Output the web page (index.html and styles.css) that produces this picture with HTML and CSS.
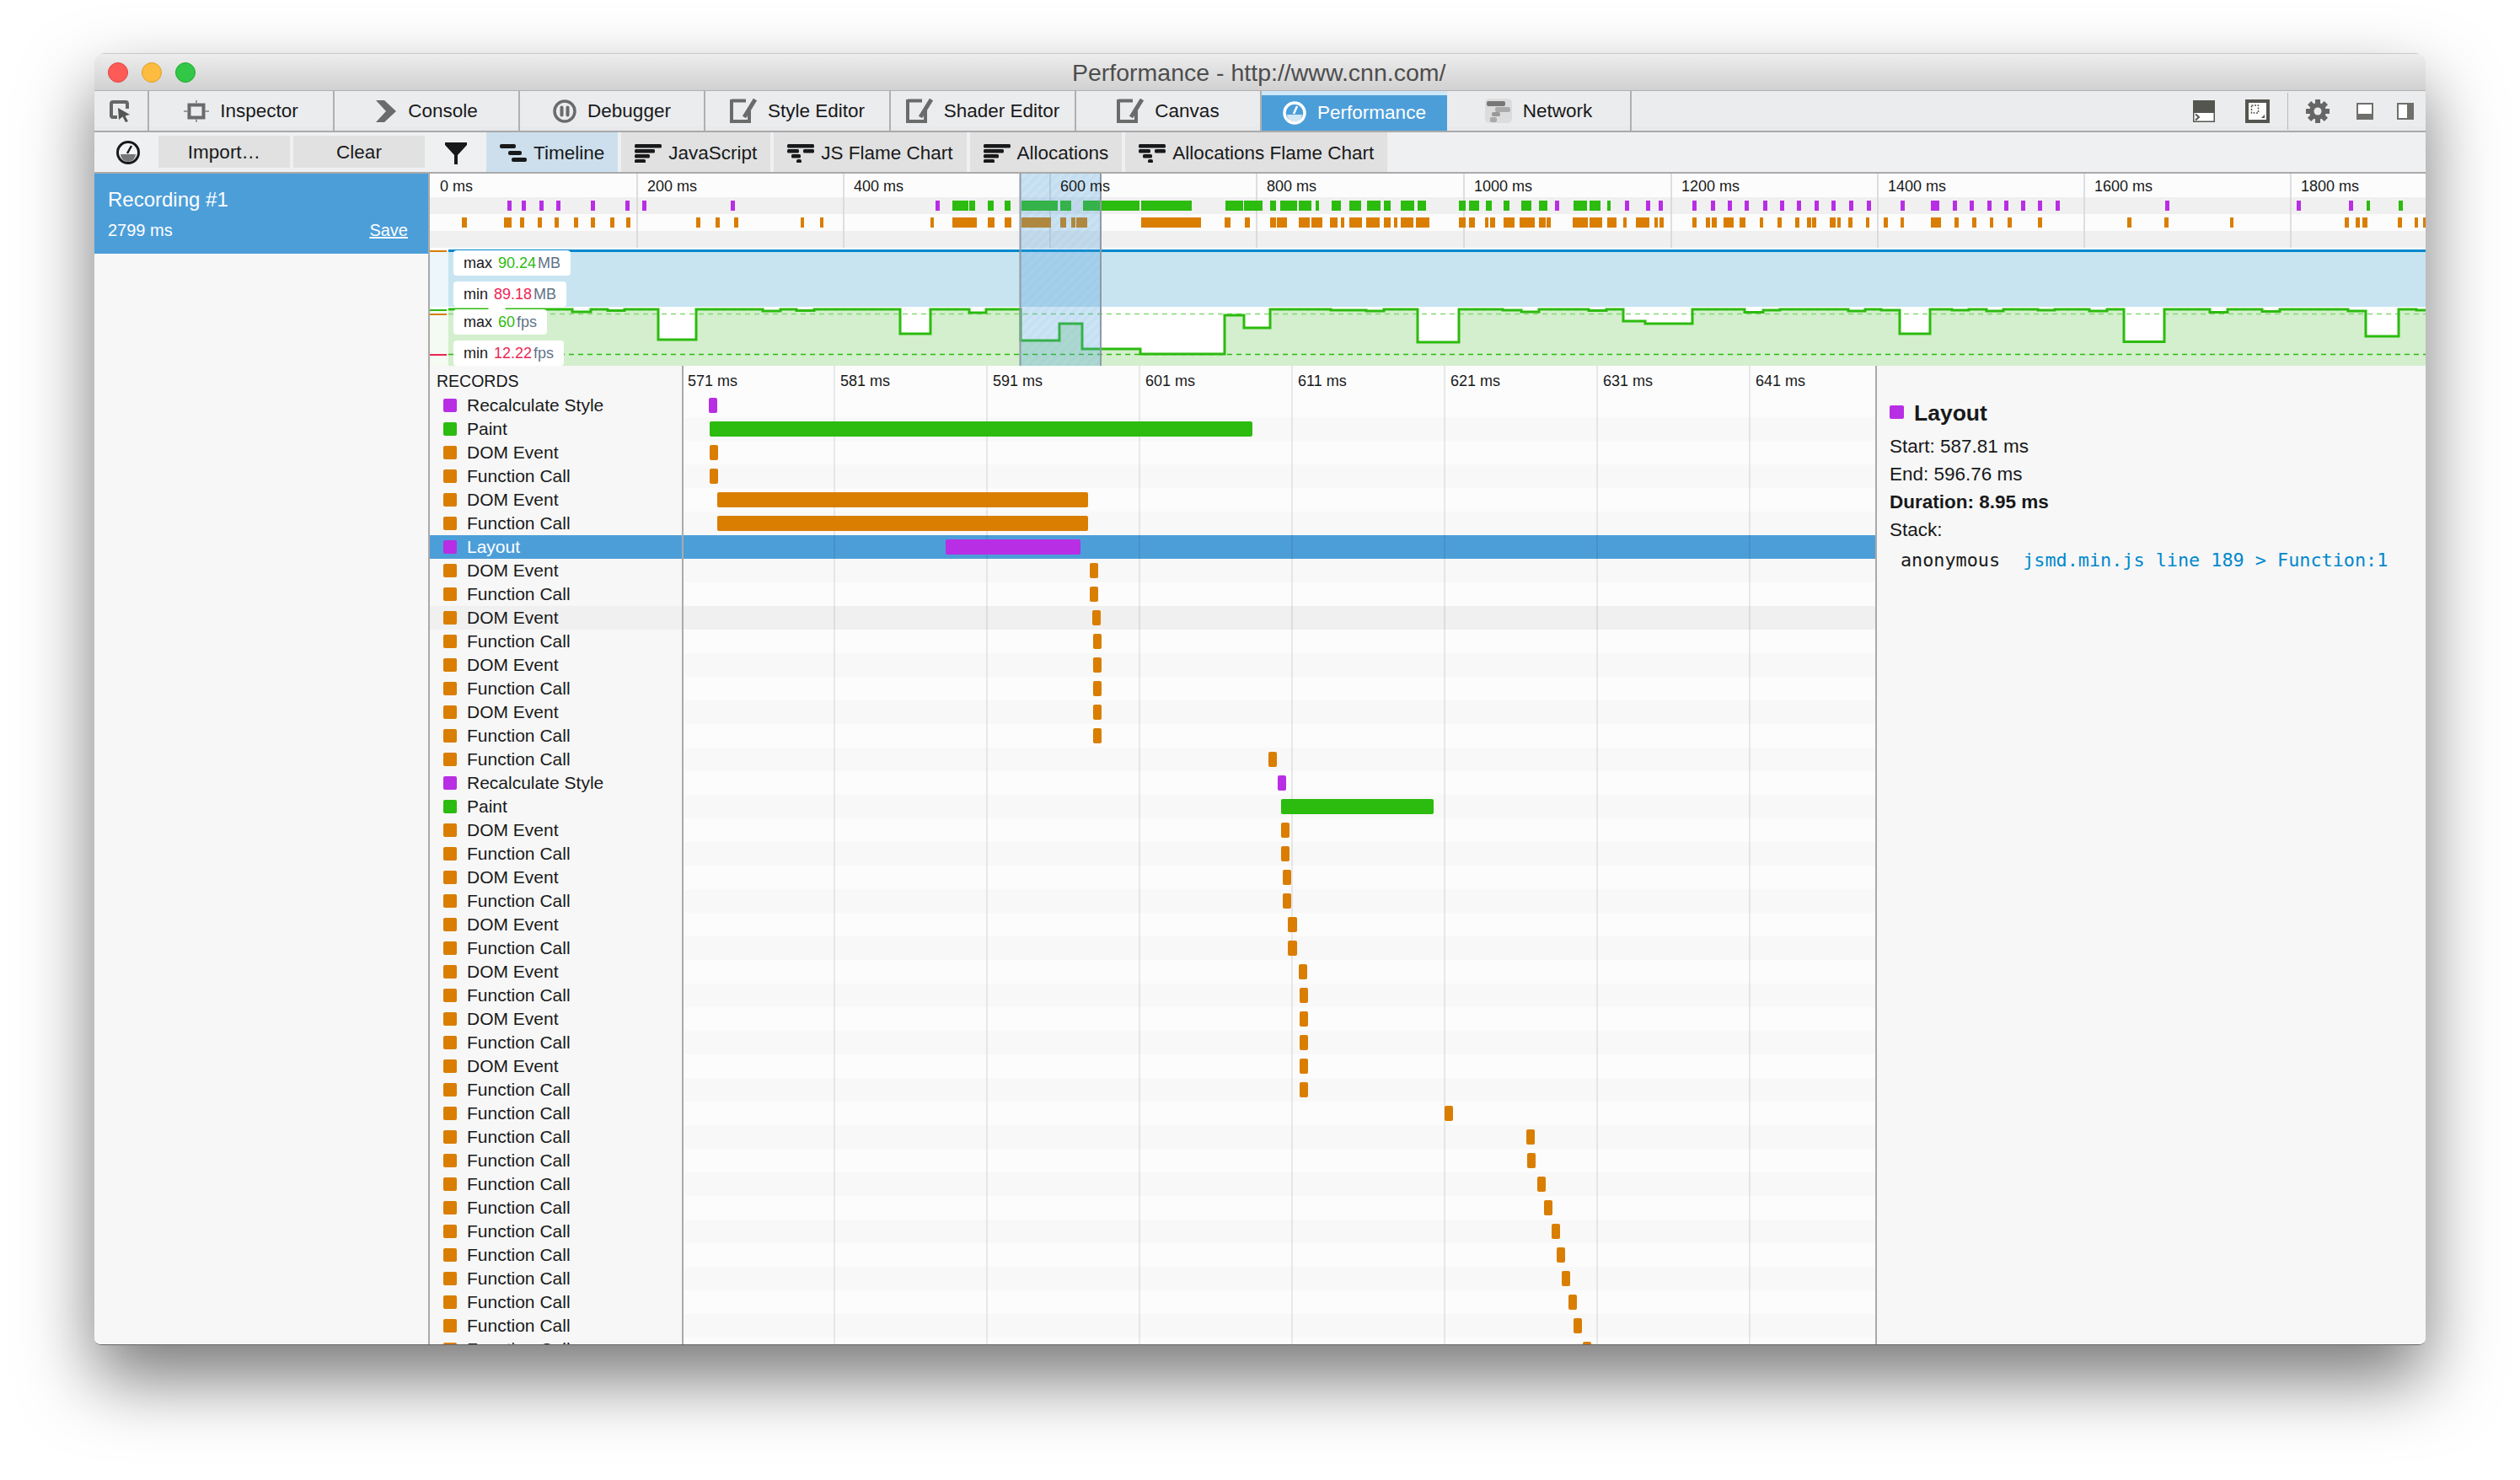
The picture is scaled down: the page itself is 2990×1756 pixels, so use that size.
FILE: index.html
```html
<!DOCTYPE html>
<html>
<head>
<meta charset="utf-8">
<title>Performance - http://www.cnn.com/</title>
<link rel="stylesheet" href="styles.css">
</head>
<body>
<svg class="sprites" width="0" height="0">
  <symbol id="i-edit" viewBox="0 0 32 29">
    <path d="M2 2.5H19M2 1V27H23V14" fill="none" stroke="#6b6b6b" stroke-width="4"/>
    <path d="M30 1L17 22" fill="none" stroke="#6b6b6b" stroke-width="5"/>
  </symbol>
  <symbol id="i-bars" viewBox="0 0 32 22">
    <rect y="0" width="32" height="4.5" rx="1.5"/>
    <rect y="6" width="24" height="4.5" rx="1.5"/>
    <rect y="12" width="18" height="4.5" rx="1.5"/>
    <rect y="18" width="13" height="4.5" rx="1.5"/>
  </symbol>
  <symbol id="i-flame" viewBox="0 0 32 22">
    <rect y="0" width="32" height="4.5" rx="1.5"/>
    <rect y="6" width="14" height="4.5" rx="1.5"/>
    <rect x="19" y="6" width="13" height="4.5" rx="1.5"/>
    <rect x="5" y="12" width="11" height="4.5" rx="1.5"/>
    <rect x="11" y="18" width="6" height="4.5" rx="2"/>
  </symbol>
</svg>

<div class="window">
  <div class="titlebar">
    <div class="lights">
      <span class="light red"></span>
      <span class="light yellow"></span>
      <span class="light green"></span>
    </div>
    <div class="title">Performance - http://www.cnn.com/</div>
  </div>

  <div class="tabbar">
    <div class="tab-pick">
      <svg width="26" height="26" viewBox="0 0 26 26">
        <path d="M9 20H4a2 2 0 0 1-2-2V4a2 2 0 0 1 2-2h15a2 2 0 0 1 2 2v6" fill="none" stroke="#666" stroke-width="4"/>
        <path d="M10 9L24 17L18.500 18.500L22 25L19 26L15.500 19.500L11 23Z" fill="#555"/>
      </svg>
    </div>
    <div class="tab">
      <svg width="30" height="26" viewBox="0 0 30 26">
        <rect x="6.500" y="5.500" width="17" height="15" fill="none" stroke="#6b6b6b" stroke-width="4"/>
        <path d="M15 0V4M15 22V26M0 13H5M25 13H30" stroke="#9a9a9a" stroke-width="2"/>
      </svg>
      <span>Inspector</span>
    </div>
    <div class="tab">
      <svg width="26" height="26" viewBox="0 0 26 26">
        <path d="M1 0H11L25 13L11 26H1L13 13Z" fill="#6b6b6b"/>
      </svg>
      <span>Console</span>
    </div>
    <div class="tab">
      <svg width="28" height="28" viewBox="0 0 28 28">
        <circle cx="14" cy="14" r="12" fill="none" stroke="#6b6b6b" stroke-width="3.500"/>
        <rect x="8.500" y="7.500" width="4" height="13" rx="2" fill="#6b6b6b"/>
        <rect x="15.500" y="7.500" width="4" height="13" rx="2" fill="#6b6b6b"/>
      </svg>
      <span>Debugger</span>
    </div>
    <div class="tab">
      <svg width="32" height="29"><use href="#i-edit"/></svg>
      <span>Style Editor</span>
    </div>
    <div class="tab">
      <svg width="32" height="29"><use href="#i-edit"/></svg>
      <span>Shader Editor</span>
    </div>
    <div class="tab">
      <svg width="32" height="29"><use href="#i-edit"/></svg>
      <span>Canvas</span>
    </div>
    <div class="tab tab-selected">
      <svg width="28" height="28" viewBox="0 0 28 28">
        <circle cx="14" cy="14" r="12" fill="none" stroke="#fff" stroke-width="3.500"/>
        <path d="M5 16H23A9 9 0 0 1 5 16Z" fill="#fff" opacity=".75"/>
        <path d="M13 15L17 6" stroke="#fff" stroke-width="2.500"/>
      </svg>
      <span>Performance</span>
    </div>
    <div class="tab">
      <svg width="32" height="29" viewBox="0 0 32 29">
        <rect width="32" height="29" rx="5" fill="#dcdcdc"/>
        <rect x="2" y="3" width="22" height="6" rx="2" fill="#777"/>
        <rect x="12" y="10" width="18" height="6" rx="2" fill="#aaa"/>
        <rect x="8" y="16" width="10" height="5" rx="2" fill="#999"/>
        <rect x="6" y="22" width="8" height="6" rx="2" fill="#aaa"/>
      </svg>
      <span>Network</span>
    </div>
    <div class="tab-tools">
      <svg class="tool-console" width="26" height="26" viewBox="0 0 26 26">
        <rect width="26" height="26" fill="#55554f"/>
        <rect x="1.500" y="15" width="23" height="9.500" fill="#fff"/>
        <path d="M3 16.500L7 20L3 23.500" fill="none" stroke="#55554f" stroke-width="2"/>
      </svg>
      <svg class="tool-responsive" width="29" height="28" viewBox="0 0 29 28">
        <rect width="29" height="28" fill="#55554f"/>
        <rect x="4" y="4" width="21" height="20" fill="#fff"/>
        <rect x="7.500" y="7" width="8" height="9" fill="none" stroke="#55554f" stroke-width="1.500" stroke-dasharray="2 1.500"/>
        <path d="M23 18V22H19Z" fill="#55554f"/>
      </svg>
      <span class="tool-sep"></span>
      <svg class="tool-gear" width="28" height="28" viewBox="0 0 28 28">
        <g fill="#666">
          <circle cx="14" cy="14" r="10"/>
          <rect x="11" y="0" width="6" height="28"/>
          <rect x="11" y="0" width="6" height="28" transform="rotate(45 14 14)"/>
          <rect x="11" y="0" width="6" height="28" transform="rotate(90 14 14)"/>
          <rect x="11" y="0" width="6" height="28" transform="rotate(135 14 14)"/>
        </g>
        <circle cx="14" cy="14" r="4.500" fill="#ebecee"/>
      </svg>
      <svg class="tool-dock" width="20" height="20" viewBox="0 0 20 20">
        <rect width="20" height="20" fill="#6f6f6b"/>
        <rect x="2" y="2" width="16" height="11" fill="#fff"/>
      </svg>
      <svg class="tool-dock-side" width="20" height="20" viewBox="0 0 20 20">
        <rect width="20" height="20" fill="#6f6f6b"/>
        <rect x="2" y="2" width="10" height="16" fill="#fff"/>
      </svg>
    </div>
  </div>

  <div class="toolbar">
    <svg class="gauge" width="28" height="28" viewBox="0 0 28 28">
      <circle cx="14" cy="14" r="12.500" fill="#f4f4f4" stroke="#18191a" stroke-width="3"/>
      <path d="M5 16H23A9 9 0 0 1 5 16Z" fill="#777"/>
      <path d="M13 15L18 6" stroke="#18191a" stroke-width="2.500"/>
    </svg>
    <button class="btn btn-import">Import…</button>
    <button class="btn btn-clear">Clear</button>
    <svg class="funnel" width="26" height="26" viewBox="0 0 26 26">
      <path d="M0 0H26V3L15 15V26H11V15L0 3Z" fill="#18191a"/>
    </svg>
    <button class="view view-selected">
      <svg width="32" height="22" viewBox="0 0 32 22">
        <rect x="0" y="0" width="19" height="5" rx="2"/>
        <rect x="10" y="8" width="16" height="5" rx="2"/>
        <rect x="14" y="16" width="18" height="5" rx="2"/>
      </svg>
      <span>Timeline</span>
    </button>
    <button class="view">
      <svg width="32" height="22"><use href="#i-bars"/></svg>
      <span>JavaScript</span>
    </button>
    <button class="view">
      <svg width="32" height="22"><use href="#i-flame"/></svg>
      <span>JS Flame Chart</span>
    </button>
    <button class="view">
      <svg width="32" height="22"><use href="#i-bars"/></svg>
      <span>Allocations</span>
    </button>
    <button class="view">
      <svg width="32" height="22"><use href="#i-flame"/></svg>
      <span>Allocations Flame Chart</span>
    </button>
  </div>

  <div class="main">
    <div class="sidebar">
      <div class="recording">
        <div class="recording-name">Recording #1</div>
        <div class="recording-info">
          <span>2799 ms</span>
          <a class="recording-save">Save</a>
        </div>
      </div>
    </div>

    <div class="content">
      <div class="overview" id="overview">
        <svg class="overview-graph" id="graph" width="2368" height="228" viewBox="510 206 2368 228"></svg>
        <div class="legend">
          <div class="legend-group">
            <div class="legend-item mem-max">max <b class="good">90.24</b><i>MB</i></div>
            <div class="legend-item mem-min">min <b class="bad">89.18</b><i>MB</i></div>
          </div>
          <div class="legend-group">
            <div class="legend-item fps-max">max <b class="good">60</b><i>fps</i></div>
            <div class="legend-item fps-min">min <b class="bad">12.22</b><i>fps</i></div>
          </div>
        </div>
      </div>

      <div class="details">
        <div class="records">
          <div class="records-head">
            <div class="rec-label">RECORDS</div>
            <div class="rec-track head-track">
              <span>571 ms</span><span>581 ms</span><span>591 ms</span><span>601 ms</span>
              <span>611 ms</span><span>621 ms</span><span>631 ms</span><span>641 ms</span>
            </div>
          </div>
          <div id="rows"></div>
        </div>
        <div class="marker-info">
          <div class="marker-title"><span class="swatch purple"></span>Layout</div>
          <div class="marker-line">Start: 587.81 ms</div>
          <div class="marker-line">End: 596.76 ms</div>
          <div class="marker-line strong">Duration: 8.95 ms</div>
          <div class="marker-line">Stack:</div>
          <div class="marker-stack">anonymous <a>jsmd.min.js line 189 &gt; Function:1</a></div>
        </div>
      </div>
    </div>
  </div>
</div>

<script src="timeline.js"></script>
</body>
</html>
```

FILE: styles.css
```css
* {
    box-sizing: border-box;
}
html, body {
    margin: 0;
    height: 100%;
    overflow: hidden;
    background: #fff;
}
body {
    padding: 63px 0 0 112px;
    font-family: "Liberation Sans", Arial, sans-serif;
    color: #18191a;
}
.sprites {
    position: absolute;
}

.window {
    width: 2766px;
    height: 1533px;
    display: flex;
    flex-direction: column;
    border-radius: 12px 12px 8px 8px;
    overflow: hidden;
    border-bottom: 1px solid #666;
    box-shadow: 0 40px 84px rgba(0, 0, 0, .53);
}

/* title bar */
.titlebar {
    height: 44px;
    flex: none;
    display: flex;
    align-items: center;
    position: relative;
    background: linear-gradient(#ededed, #d1d1d1);
    border-top: 1px solid #c8c8c8;
}
.lights {
    display: flex;
    gap: 16px;
    padding-left: 16px;
}
.light {
    width: 24px;
    height: 24px;
    border-radius: 50%;
}
.red { background: #fc5b57; border: 1px solid #e0443e; }
.yellow { background: #fdbc40; border: 1px solid #dea123; }
.green { background: #33c748; border: 1px solid #1daa2c; }
.title {
    position: absolute;
    left: 1160px;
    top: 5px;
    font-size: 28.500px;
    line-height: 34px;
    color: #4d4d4d;
}

/* tabs */
.tabbar {
    height: 50px;
    flex: none;
    display: flex;
    align-items: stretch;
    background: linear-gradient(#ebecee 90%, #e8e9eb 90%);
    border-top: 1px solid #b1b1b1;
    border-bottom: 2px solid #aaa;
    font-size: 22.5px;
}
.tab-pick {
    width: 65px;
    display: flex;
    align-items: center;
    justify-content: center;
    padding-right: 2px;
    border-right: 2px solid #b0b0b0;
}
.tab {
    width: 220px;
    display: flex;
    align-items: center;
    justify-content: center;
    gap: 13px;
    border-right: 2px solid #b0b0b0;
}
.tab-selected {
    background: #4c9ed9;
    border-right: none;
    border-top: 5px solid #cfe8f7;
    color: #fff;
}
.tab-selected + .tab {
    width: 219px;
}
.tab-tools {
    margin-left: auto;
    display: flex;
    align-items: center;
    padding-right: 14px;
}
.tool-responsive {
    margin-left: 36px;
}
.tool-sep {
    width: 1px;
    height: 44px;
    margin: 0 21px;
    background: #b8b8b8;
}
.tool-dock {
    margin-left: 32px;
}
.tool-dock-side {
    margin-left: 28px;
}

/* toolbar */
.toolbar {
    height: 49px;
    flex: none;
    display: flex;
    align-items: stretch;
    background: #eff0f2;
    border-bottom: 2px solid #aaa;
    font-size: 22.5px;
}
.gauge {
    align-self: center;
    margin-left: 26px;
}
.btn, .view {
    font: inherit;
    color: inherit;
    border: none;
    background: #e1e1e1;
    padding: 0;
}
.btn {
    width: 156px;
    height: 38px;
    margin-top: 4px;
    padding-top: 1px;
    align-self: flex-start;
}
.btn-import {
    margin-left: 22px;
}
.btn-clear {
    margin-left: 4px;
}
.funnel {
    align-self: center;
    margin: 2px 23px 0 24px;
}
.view {
    display: flex;
    align-items: center;
    gap: 8px;
    padding: 3px 16px 0;
    margin-right: 4px;
}
.view svg {
    fill: #18191a;
}
.view-selected {
    background: #cddfec;
}

/* main split */
.main {
    flex: 1;
    display: flex;
    min-height: 0;
}
.sidebar {
    width: 398px;
    flex: none;
    background: #f7f7f7;
    border-right: 2px solid #aaa;
}
.recording {
    height: 95px;
    padding: 15px 16px 0;
    background: #4c9ed9;
    color: #fff;
}
.recording-name {
    font-size: 24px;
    line-height: 32px;
}
.recording-info {
    display: flex;
    justify-content: space-between;
    align-items: center;
    padding: 7px 8px 0 0;
    font-size: 20px;
    line-height: 26px;
}
.recording-save {
    text-decoration: underline;
}

.content {
    flex: 1;
    min-width: 0;
    display: flex;
    flex-direction: column;
}

/* overview */
.overview {
    height: 228px;
    flex: none;
    position: relative;
    background: #fff;
}
.overview-graph {
    display: block;
}
.tick {
    position: absolute;
    top: 3px;
    font-size: 18px;
    line-height: 24px;
}
.legend {
    position: absolute;
    left: 28px;
    top: 91px;
    display: flex;
    flex-direction: column;
    gap: 3px;
}
.legend-group {
    display: flex;
    flex-direction: column;
    gap: 7px;
}
.legend-item {
    height: 30px;
    padding: 0 12px;
    font-size: 18px;
    line-height: 30px;
    background: #fff;
    border-radius: 4px;
    align-self: flex-start;
    white-space: nowrap;
}
.legend-item b {
    font-weight: normal;
    margin-left: 2px;
}
.legend-item i {
    font-style: normal;
    color: #5f7387;
    margin-left: 2px;
}
.good { color: #2cbb0f; }
.bad { color: #ed2655; }

/* records */
.details {
    flex: 1;
    display: flex;
    min-height: 0;
}
.records {
    width: 1717px;
    flex: none;
    overflow: hidden;
    border-right: 2px solid #aaa;
    background: #fcfcfc;
}
.records-head {
    height: 33px;
    display: flex;
    align-items: center;
}
.rec-label {
    width: 301px;
    flex: none;
    height: 100%;
    display: flex;
    align-items: center;
    background: #f7f7f7;
    border-right: 2px solid #aaa;
}
.records-head .rec-label {
    padding: 3px 0 0 8px;
    font-size: 19.500px;
}
.rec-track {
    flex: 1;
    height: 100%;
    display: flex;
    align-items: center;
    background-image: linear-gradient(90deg, rgba(0, 0, 0, .08) 2px, transparent 2px);
    background-size: 181px 100%;
    background-position: 178px 0;
}
.head-track {
    padding-top: 3px;
}
.head-track span {
    width: 181px;
    flex: none;
    padding-left: 5px;
    font-size: 18px;
}
.rec-row {
    height: 28px;
    display: flex;
    font-size: 21px;
}
.rec-row .rec-label {
    padding-left: 16px;
    gap: 12px;
}
.rec-row:nth-child(even) .rec-track {
    background-color: #f8f8f8;
}
.rec-row.hover .rec-track,
.rec-row.hover .rec-label {
    background-color: #f0f0f0;
}
.rec-row.selected .rec-label,
.rec-row.selected .rec-track {
    background-color: #4c9ed9;
    color: #fff;
}
.swatch {
    width: 16px;
    height: 16px;
    flex: none;
    border-radius: 2px;
}
.bar {
    height: 18px;
    border-radius: 2px;
}
.purple { background-color: #b82ee5; }
.lime { background-color: #2cbb0f; }
.orange { background-color: #d97e00; }

/* side panel */
.marker-info {
    flex: 1;
    background: #f7f7f7;
    padding: 38px 0 0 15px;
    font-size: 22.5px;
}
.marker-title {
    display: flex;
    align-items: center;
    gap: 12px;
    height: 36px;
    font-size: 26.500px;
    font-weight: bold;
}
.marker-title .swatch {
    width: 17px;
    margin-top: -2px;
}
.marker-line {
    height: 33px;
    line-height: 33px;
}
.marker-title + .marker-line {
    margin-top: 5px;
}
.strong {
    font-weight: bold;
}
.marker-stack {
    margin-top: 2px;
    padding-left: 13px;
    height: 36px;
    line-height: 36px;
    font-family: "DejaVu Sans Mono", "Liberation Mono", monospace;
    font-size: 21.800px;
    white-space: pre;
}
.marker-stack a {
    margin-left: 14px;
    color: #0088cc;
}
```

FILE: timeline.js
```js
var O = "orange", P = "purple", G = "lime";
var RS = "Recalculate Style", PT = "Paint", DE = "DOM Event", FC = "Function Call";

// name, colour, bar left (page x), bar width
var records = [
    [RS, P, 841, 10], [PT, G, 842, 644], [DE, O, 842, 10], [FC, O, 842, 10],
    [DE, O, 851, 440], [FC, O, 851, 440], ["Layout", P, 1122, 160],
    [DE, O, 1293, 10], [FC, O, 1293, 10], [DE, O, 1296, 10], [FC, O, 1297, 10],
    [DE, O, 1297, 10], [FC, O, 1297, 10], [DE, O, 1297, 10], [FC, O, 1297, 10],
    [FC, O, 1505, 10], [RS, P, 1516, 10], [PT, G, 1520, 181], [DE, O, 1520, 10],
    [FC, O, 1520, 10], [DE, O, 1522, 10], [FC, O, 1522, 10], [DE, O, 1528, 11],
    [FC, O, 1528, 11], [DE, O, 1541, 10], [FC, O, 1542, 10], [DE, O, 1542, 10],
    [FC, O, 1542, 10], [DE, O, 1542, 10], [FC, O, 1542, 10], [FC, O, 1714, 10],
    [FC, O, 1811, 10], [FC, O, 1812, 10], [FC, O, 1824, 10], [FC, O, 1832, 10],
    [FC, O, 1841, 10], [FC, O, 1847, 10], [FC, O, 1853, 10], [FC, O, 1861, 10],
    [FC, O, 1867, 10], [FC, O, 1878, 10]
];

var html = "";
records.forEach(function (r, i) {
    var cls = "rec-row" + (i == 6 ? " selected" : "") + (i == 9 ? " hover" : "");
    html += '<div class="' + cls + '">' +
        '<div class="rec-label"><span class="swatch ' + r[1] + '"></span>' + r[0] + '</div>' +
        '<div class="rec-track"><div class="bar ' + r[1] + '" style="margin-left:' + (r[2] - 811) + 'px;width:' + r[3] + 'px"></div></div>' +
        '</div>';
});
document.getElementById("rows").innerHTML = html;

// overview, all in page coordinates thanks to the viewBox
var RIGHT = 2878, WIDTH = RIGHT - 510;

var ticks = [
    [510, "0 ms"], [756, "200 ms"], [1001, "400 ms"], [1246, "600 ms"], [1491, "800 ms"],
    [1737, "1000 ms"], [1983, "1200 ms"], [2228, "1400 ms"], [2473, "1600 ms"], [2718, "1800 ms"]
];

var purpleMarks = [602, 619, 640, 660, 701, 742, 762, 867, 1110, 1845, 1928, 1953, 1968, 2008,
    2030, 2050, 2070, 2092, 2112, 2132, 2153, 2173, 2194, 2215, 2255, 2291, 2296, 2317, 2337,
    2358, 2378, 2398, 2418, 2439, 2569, 2725, 2787];

var greenMarks = [[1130, 1149], [1150, 1157], [1172, 1179], [1192, 1199], [1212, 1255], [1258, 1271],
    [1285, 1352], [1354, 1414], [1454, 1475], [1476, 1498], [1507, 1514], [1519, 1539], [1541, 1556],
    [1561, 1565], [1580, 1591], [1601, 1615], [1622, 1638], [1642, 1650], [1662, 1678], [1682, 1692],
    [1731, 1739], [1743, 1755], [1763, 1770], [1784, 1791], [1805, 1817], [1826, 1836], [1867, 1883],
    [1886, 1899], [1907, 1911], [2808, 2812], [2846, 2851]];

var orangeMarks = [[548, 554], [598, 607], [617, 622], [638, 643], [658, 663], [681, 686], [701, 706],
    [724, 729], [743, 748], [826, 831], [849, 854], [871, 876], [950, 954], [973, 977], [1104, 1108],
    [1130, 1159], [1172, 1180], [1192, 1200], [1212, 1247], [1258, 1265], [1271, 1276], [1277, 1290],
    [1354, 1425], [1453, 1460], [1477, 1483], [1507, 1514], [1515, 1527], [1541, 1554], [1556, 1569],
    [1578, 1587], [1591, 1595], [1601, 1616], [1621, 1637], [1642, 1650], [1654, 1658], [1662, 1677],
    [1680, 1696], [1731, 1739], [1743, 1750], [1762, 1766], [1768, 1774], [1784, 1797], [1803, 1821],
    [1826, 1834], [1835, 1840], [1866, 1884], [1886, 1901], [1907, 1918], [1926, 1930], [1941, 1957],
    [1963, 1967], [1969, 1974], [2008, 2013], [2024, 2029], [2031, 2037], [2045, 2057], [2064, 2071],
    [2088, 2092], [2109, 2114], [2130, 2135], [2144, 2149], [2150, 2155], [2171, 2178], [2180, 2184],
    [2193, 2198], [2214, 2218], [2235, 2240], [2255, 2259], [2291, 2303], [2319, 2324], [2340, 2345],
    [2361, 2365], [2382, 2387], [2418, 2423], [2524, 2529], [2568, 2573], [2646, 2650], [2782, 2787],
    [2795, 2800], [2803, 2809], [2845, 2850], [2865, 2869], [2875, 2878]];

// from this x on, the fps line sits at this y
var fps = [[532, 367], [578, 395], [601, 367], [679, 370], [701, 367], [721, 368.5], [741, 367],
    [781, 403], [826, 367], [905, 369], [926, 367], [945, 368.5], [966, 367], [1068, 396], [1104, 367],
    [1150, 371], [1170, 367], [1211, 404], [1257, 384], [1284, 414], [1353, 420], [1453, 374], [1476, 389],
    [1507, 367], [1579, 368], [1621, 369], [1642, 367], [1682, 406], [1731, 367], [1783, 368], [1805, 370],
    [1826, 367], [1885, 368.5], [1906, 367], [1926, 381], [1952, 384], [2008, 367], [2070, 370.5],
    [2092, 368], [2112, 367], [2193, 369], [2213, 367], [2232, 368], [2254, 396], [2290, 367], [2316, 368],
    [2336, 367], [2357, 369], [2377, 367], [2418, 368], [2438, 367], [2479, 369], [2500, 367], [2520, 405.5],
    [2568, 367], [2622, 370.5], [2643, 367], [2684, 369.5], [2705, 367], [2786, 369], [2807, 399], [2846, 367],
    [2867, 368]];

function rect(x, y, w, h, fill) {
    return '<rect x="' + x + '" y="' + y + '" width="' + w + '" height="' + h + '" fill="' + fill + '"/>';
}
function line(x1, y1, x2, y2, stroke, w, dash) {
    return '<line x1="' + x1 + '" y1="' + y1 + '" x2="' + x2 + '" y2="' + y2 + '" stroke="' + stroke +
        '" stroke-width="' + w + '"' + (dash ? ' stroke-dasharray="' + dash + '"' : '') + '/>';
}

var s = '<defs><pattern id="hatch" width="8" height="8" patternUnits="userSpaceOnUse" patternTransform="rotate(-45)">' +
    '<rect width="8" height="4" fill="#4c9ed9" opacity=".06"/></pattern></defs>';

s += rect(510, 206, WIDTH, 228, "#fff");
s += rect(510, 206, WIDTH, 28, "#fcfcfc");
s += rect(510, 234, WIDTH, 20, "#f0f0f0");
s += rect(510, 254, WIDTH, 20, "#fcfcfc");
s += rect(510, 274, WIDTH, 20, "#f0f0f0");

ticks.forEach(function (t) {
    if (t[0] > 510) s += line(t[0], 206, t[0], 294, "#d4d4d4", 1.5);
});

purpleMarks.forEach(function (x) { s += rect(x, 238, 5, 12, "#b82ee5"); });
greenMarks.forEach(function (m) { s += rect(m[0], 238, m[1] - m[0], 12, "#2cbb0f"); });
orangeMarks.forEach(function (m) { s += rect(m[0], 258, m[1] - m[0], 12, "#d97e00"); });

// memory
s += rect(510, 297, 22, 67, "#ecf6fb");
s += rect(532, 297, RIGHT - 532, 67, "#c8e4f1");
s += rect(532, 296, RIGHT - 532, 3, "#0088cc");
s += rect(510, 297, 20, 2, "#d97e00");

// fps
s += rect(510, 367, 22, 67, "#f4fbf2");
var d = "M532 " + fps[0][1];
fps.forEach(function (p) { d += "H" + p[0] + "V" + p[1]; });
d += "H" + RIGHT;
s += '<path d="' + d + 'V434H532Z" fill="#d3efcd"/>';
s += line(532, 368, RIGHT, 368, "#fff", 1, "6 5");
s += line(532, 372.5, RIGHT, 372.5, "#86d876", 1.5, "6 5");
s += line(532, 420.5, RIGHT, 420.5, "#2cbb0f", 1.5, "6 5");
s += '<path d="' + d + '" fill="none" stroke="#2cbb0f" stroke-width="3"/>';
s += rect(510, 367, 20, 2, "#2cbb0f");
s += rect(510, 372, 20, 2, "#d97e00");
s += rect(510, 420, 20, 2, "#ed2655");

// selection
s += rect(1210, 206, 96, 228, "rgba(76,158,217,.28)");
s += rect(1210, 206, 96, 228, "url(#hatch)");
s += rect(1209.5, 206, 2, 228, "#8d9aa5");
s += rect(1305, 206, 2, 228, "#8d9aa5");

document.getElementById("graph").innerHTML = s;

var overview = document.getElementById("overview");
ticks.forEach(function (t) {
    var el = document.createElement("div");
    el.className = "tick";
    el.style.left = (t[0] - 510 + 12) + "px";
    el.textContent = t[1];
    overview.appendChild(el);
});
```
